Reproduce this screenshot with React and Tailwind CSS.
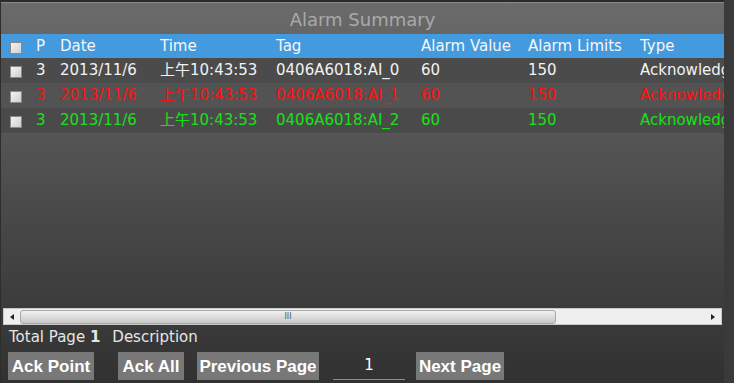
import React from 'react'

const rows = [
  { color: 'text-[#f2f2f2]', bg: 'bg-[#4b4b4b]', tag: '0406A6018:AI_0' },
  { color: 'text-[#ff1010]', bg: 'bg-[#535353]', tag: '0406A6018:AI_1' },
  { color: 'text-[#18e018]', bg: 'bg-[#4a4a4a]', tag: '0406A6018:AI_2' },
]

const cols = 'grid grid-cols-[35px_24px_100px_116px_145px_107px_112px_84px]'

function Box() {
  return <div className="ml-[9px] w-[12px] h-[12px] border border-[#8a8a8a] bg-gradient-to-br from-[#f4f4f4] to-[#cfcfcf]" />
}

function Btn({ children, className = '' }) {
  return (
    <button
      className={`h-[28px] px-0 flex items-center justify-center whitespace-nowrap bg-[#787878] text-white font-bold text-[17px] leading-none ${className}`}
      style={{ fontFamily: '"Liberation Sans", sans-serif' }}
    >
      {children}
    </button>
  )
}

export default function App() {
  return (
    <div
      className="w-[734px] h-[383px] bg-[#393939] flex overflow-hidden"
      style={{ fontFamily: '"DejaVu Sans", "Noto Sans CJK SC", sans-serif' }}
    >
      <div className="w-[724px] h-full flex flex-col border-l border-[#2e2e2e] border-t-2 border-t-[#2a2a2a] bg-gradient-to-b from-[#6b6b6b] via-[#4c4c4c] to-[#313131]">
        <div className="h-[1px] bg-[#8a8a8a]" />
        <div className="h-[31px] flex items-center justify-center text-[18px] text-[#a9a9a9] pt-[2px]">Alarm Summary</div>

        <div className={`${cols} h-[24px] items-center bg-[#449ade] text-[15px] text-[#f6f6f6] whitespace-nowrap`}>
          <div className="pt-[3px]"><Box /></div>
          <span>P</span>
          <span>Date</span>
          <span>Time</span>
          <span>Tag</span>
          <span>Alarm Value</span>
          <span>Alarm Limits</span>
          <span className="overflow-hidden">Type</span>
        </div>

        {rows.map((r, i) => (
          <div key={i} className={`${cols} h-[25px] items-center text-[15px] whitespace-nowrap ${r.bg} ${r.color}`}>
            <div className="pt-[3px]"><Box /></div>
            <span>3</span>
            <span>2013/11/6</span>
            <span>上午10:43:53</span>
            <span>{r.tag}</span>
            <span>60</span>
            <span>150</span>
            <span className="overflow-hidden">Acknowledged</span>
          </div>
        ))}

        <div className="flex-1" />

        <div className="mx-[2px] h-[17px] bg-[#efefef] border border-[#c8c8c8] flex items-center">
          <div className="w-[16px] flex justify-center">
            <div className="w-0 h-0 border-y-[3px] border-y-transparent border-r-[4px] border-r-[#222]" />
          </div>
          <div className="w-[536px] h-[14px] rounded-[3px] border border-[#a8a8a8] bg-gradient-to-b from-[#f2f2f2] via-[#dcdcdc] to-[#c8c8c8] flex items-center justify-center text-[8px] text-[#555] leading-none">
            III
          </div>
          <div className="flex-1" />
          <div className="w-[16px] flex justify-center">
            <div className="w-0 h-0 border-y-[3px] border-y-transparent border-l-[4px] border-l-[#222]" />
          </div>
        </div>

        <div className="h-[22px] mt-[1px] flex items-center gap-[12px] pl-[8px] text-[15px] text-[#e6e6e6] leading-none">
          <span>Total Page <b>1</b></span>
          <span>Description</span>
        </div>

        <div className="h-[28px] mt-[4px] mb-[3px] flex items-start pl-[7px]">
          <Btn className="w-[86px]">Ack Point</Btn>
          <Btn className="ml-[24px] w-[66px]">Ack All</Btn>
          <Btn className="ml-[13px] w-[122px]">Previous Page</Btn>
          <div className="ml-[14px] w-[72px] h-[28px] border-b border-[#8c8c8c] flex items-center justify-center text-[15px] text-white">1</div>
          <Btn className="ml-[11px] w-[88px]">Next Page</Btn>
        </div>
      </div>
      <div className="flex-1 bg-[#3a3a3a]" />
    </div>
  )
}
